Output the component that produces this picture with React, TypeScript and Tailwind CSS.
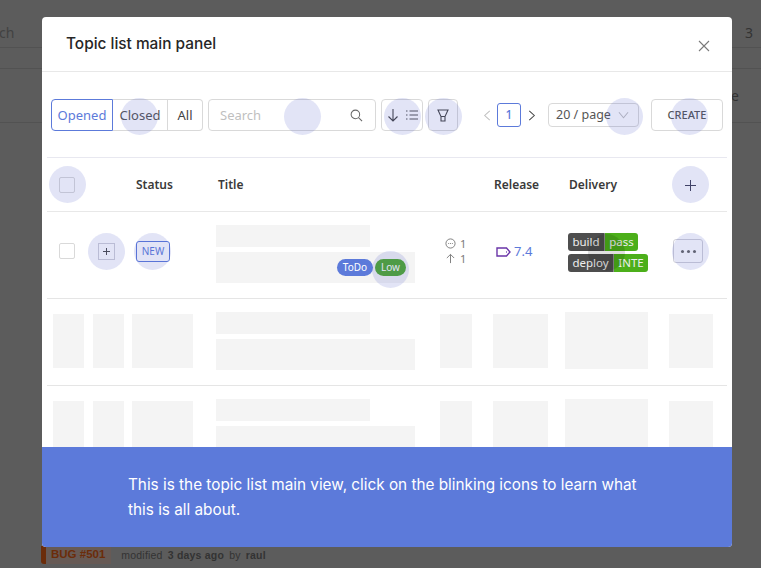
import React from "react";

const ui = "font-['Noto_Sans','Open_Sans',sans-serif]";

function Pulse({ className }: { className: string }) {
  return <div className={`pointer-events-none absolute h-[37px] w-[37px] rounded-full bg-[#4d56c4]/[0.16] ${className}`} />;
}

function Sk({ className }: { className: string }) {
  return <div className={`shrink-0 bg-[#f4f4f4] ${className}`} />;
}

function SkeletonRow() {
  return (
    <div className="flex h-[87px] shrink-0 border-b border-[#e5e5e5]">
      <Sk className="ml-[6px] mt-[15px] h-[54px] w-[31px]" />
      <Sk className="ml-[9px] mt-[15px] h-[54px] w-[31px]" />
      <Sk className="ml-[8px] mt-[15px] h-[54px] w-[61px]" />
      <div className="ml-[23px] flex w-[199px] shrink-0 flex-col gap-[5px] pt-[13px]">
        <Sk className="h-[22px] w-[154px]" />
        <Sk className="h-[31px] w-[199px]" />
      </div>
      <Sk className="ml-[25px] mt-[15px] h-[54px] w-[32px]" />
      <Sk className="ml-[21px] mt-[15px] h-[54px] w-[55px]" />
      <Sk className="ml-[17px] mt-[13px] h-[57px] w-[83px]" />
      <Sk className="ml-[21px] mt-[15px] h-[54px] w-[44px]" />
    </div>
  );
}

function Badge({ left, right, leftW, rightW }: { left: string; right: string; leftW: string; rightW: string }) {
  return (
    <div className="flex h-[18px] overflow-hidden rounded-[3px] text-[11.5px] leading-[18px] text-[#eeeeee]">
      <span className={`bg-[#4e4e4e] text-center ${leftW}`}>{left}</span>
      <span className={`border-l border-[#8a8a8a] bg-[#4caf1a] text-center ${rightW}`}>{right}</span>
    </div>
  );
}

export default function App() {
  return (
    <div className={`relative h-[568px] w-[761px] overflow-hidden bg-[#5c5c5c] ${ui}`}>
      {/* page behind the dimmed overlay */}
      <div className="flex h-[48px] items-center justify-between border-b border-[#525252] pr-[8px] pt-[18px] text-[14px] text-[#333]">
        <span className="-ml-[1px] text-[#424242]">ch</span>
        <span>3</span>
      </div>
      <div className="h-[21px] border-b border-[#525252]" />
      <div className="flex h-[54px] items-center justify-end border-b border-[#525252] pr-[22px] text-[14px] text-[#333]">
        <span>e</span>
      </div>
      <div className="absolute left-[41px] top-[545px] flex h-[19px] items-center gap-[10px] text-[10.5px] text-[#333]">
        <span className="flex h-[18px] items-center rounded-bl-[3px] border-l-[5px] border-[#6b2c0a] bg-[#675a55] pl-[5px] pr-[6px] font-['Liberation_Sans',sans-serif] text-[11.5px] font-bold text-[#6b2c0a]">
          BUG #501
        </span>
        <span className="mt-[2px] font-['Liberation_Sans',sans-serif] tracking-[0.2px]">
          modified <b className="mx-[2px]">3 days ago</b> by <b className="ml-[2px]">raul</b>
        </span>
      </div>

      {/* modal */}
      <div className="absolute left-[42px] top-[17px] flex h-[530px] w-[690px] flex-col overflow-hidden rounded-[4px] bg-white">
        <div className="flex h-[55px] shrink-0 items-center justify-between border-b border-[#e8e8e8] pl-[24px] pr-[22px]">
          <h2 className="font-['Inter',sans-serif] text-[15.4px] font-medium text-[#262626]">Topic list main panel</h2>
          <svg viewBox="0 0 12 12" className="mt-[4px] h-[12px] w-[12px]" fill="none" stroke="#7a7a7a" strokeWidth="1.1">
            <path d="M1 1l10 10M11 1L1 11" />
          </svg>
        </div>

        <div className="min-h-0 flex-1 overflow-hidden">
          {/* toolbar */}
          <div className="mx-[5px] flex h-[86px] items-start border-b border-[#e8e8f0] pl-[4px] pt-[27px] text-[13px] text-[#4a4a4a]">
            <div className="flex h-[32px] items-stretch rounded-[4px] leading-[30px]">
              <span className="w-[62px] rounded-l-[4px] border border-[#5c7ada] text-center text-[#5c7ada]">Opened</span>
              <span className="w-[55px] border-y border-r border-[#d9d9d9] text-center text-[#555]">Closed</span>
              <span className="w-[35px] rounded-r-[4px] border-y border-r border-[#d9d9d9] text-center text-[#444]">All</span>
            </div>
            <div className="ml-[5px] flex h-[32px] w-[168px] items-center justify-between rounded-[4px] border border-[#d9d9d9] pl-[11px] pr-[12px] text-[#bfbfbf]">
              <span className="pt-[1px]">Search</span>
              <svg viewBox="0 0 14 14" className="h-[13px] w-[13px]" fill="none" stroke="#666" strokeWidth="1.1">
                <circle cx="5.8" cy="5.8" r="4.6" />
                <path d="M9.2 9.2L13 13" />
              </svg>
            </div>
            <div className="ml-[5px] flex h-[32px] w-[42px] items-center justify-center gap-[7px] rounded-[4px] border border-[#d9d9d9]">
              <svg viewBox="0 0 12 14" className="h-[14px] w-[12px]" fill="none" stroke="#444" strokeWidth="1.1">
                <path d="M6 1v12M1.5 8.5L6 13l4.5-4.5" />
              </svg>
              <svg viewBox="0 0 12 10" className="h-[10px] w-[12px]" fill="none" stroke="#555" strokeWidth="1">
                <path d="M3.5 1H12M3.5 5H12M3.5 9H12M0 1h1.5M0 5h1.5M0 9h1.5" />
              </svg>
            </div>
            <div className="ml-[5px] flex h-[32px] w-[30px] items-center justify-center rounded-[4px] border border-[#d9d9d9]">
              <svg viewBox="0 0 12 13" className="h-[13px] w-[12px]" fill="none" stroke="#444" strokeWidth="1.1">
                <path d="M1 1h10L8 7.5v4.5H4V7.5zM3.8 7.5h4.4" />
              </svg>
            </div>
            <div className="ml-[25px] mt-[4px] flex h-[24px] items-center">
              <svg viewBox="0 0 8 12" className="h-[11px] w-[8px]" fill="none" stroke="#bfbfbf" strokeWidth="1.1">
                <path d="M7 1L1.5 6 7 11" />
              </svg>
              <span className="ml-[6px] flex h-[24px] w-[24px] items-center justify-center rounded-[3px] border border-[#5c7ada] text-[12px] font-medium text-[#5c7ada]">1</span>
              <svg viewBox="0 0 8 12" className="ml-[7px] h-[11px] w-[8px]" fill="none" stroke="#444" strokeWidth="1.1">
                <path d="M1 1l5.5 5L1 11" />
              </svg>
              <div className="ml-[12px] flex h-[24px] w-[91px] items-center justify-between rounded-[4px] border border-[#d9d9d9] pl-[7px] pr-[9px] text-[12.5px] text-[#555]">
                <span>20 / page</span>
                <svg viewBox="0 0 12 8" className="h-[8px] w-[11px]" fill="none" stroke="#bfbfbf" strokeWidth="1.1">
                  <path d="M1 1l5 6 5-6" />
                </svg>
              </div>
            </div>
            <div className="ml-[12px] flex h-[32px] w-[72px] items-center justify-center rounded-[4px] border border-[#d9d9d9] text-[11px] font-medium text-[#555]">
              CREATE
            </div>
          </div>

          {/* table head */}
          <div className="mx-[5px] flex h-[54px] items-center border-b border-[#e8e8e8] text-[12px] font-semibold text-[#3a3a3a]">
            <div className="ml-[12px] h-[16px] w-[16px] rounded-[2px] border border-[#d9d9d9]" />
            <span className="ml-[61px] w-[82px]">Status</span>
            <span className="w-[276px]">Title</span>
            <span className="w-[75px]">Release</span>
            <span className="w-[116px]">Delivery</span>
            <svg viewBox="0 0 12 12" className="mt-[1px] h-[11px] w-[11px]" fill="none" stroke="#3f3f55" strokeWidth="1.1">
              <path d="M6 0v12M0 6h12" />
            </svg>
          </div>

          {/* rows */}
          <div className="mx-[5px] flex h-[87px] shrink-0 items-center border-b border-[#e5e5e5] pb-[8px]">
            <div className="ml-[12px] h-[16px] w-[16px] shrink-0 rounded-[2px] border border-[#d9d9d9]" />
            <div className="ml-[23px] flex h-[17px] w-[17px] shrink-0 items-center justify-center border border-[#d0d0d8]">
              <svg viewBox="0 0 8 8" className="h-[7px] w-[7px]" fill="none" stroke="#444" strokeWidth="1.1">
                <path d="M4 0v8M0 4h8" />
              </svg>
            </div>
            <div className="ml-[21px] flex h-[21px] w-[34px] shrink-0 items-center justify-center rounded-[3px] border border-[#5c7ada] text-[10px] text-[#5c7ada]">
              NEW
            </div>
            <div className="relative ml-[46px] mt-[6px] flex w-[199px] shrink-0 flex-col gap-[5px]">
              <Sk className="h-[22px] w-[154px]" />
              <Sk className="h-[31px] w-[199px]" />
              <div className="absolute bottom-[7px] right-[9px] flex gap-[2px] text-[10px] leading-[17px] text-white">
                <span className="w-[36px] rounded-full bg-[#5c7ada] text-center">ToDo</span>
                <span className="w-[31px] rounded-full bg-[#4fa82e] text-center">Low</span>
              </div>
            </div>
            <div className="ml-[30px] flex w-[24px] shrink-0 flex-col text-[11px] leading-[15px] text-[#7a7a7a]">
              <span className="flex items-center gap-[4px]">
                <svg viewBox="0 0 12 12" className="h-[11px] w-[11px]" fill="none" stroke="#777" strokeWidth="1">
                  <circle cx="6" cy="6" r="5" />
                  <path d="M3.5 6h1M5.5 6h1M7.5 6h1" />
                </svg>
                1
              </span>
              <span className="flex items-center gap-[4px]">
                <svg viewBox="0 0 12 12" className="h-[11px] w-[11px]" fill="none" stroke="#777" strokeWidth="1">
                  <path d="M6 11V1.5M2 5.5l4-4 4 4" />
                </svg>
                1
              </span>
            </div>
            <div className="ml-[27px] mt-[1px] flex w-[72px] shrink-0 items-center gap-[3px] text-[13px] text-[#5c7ada]">
              <svg viewBox="0 0 15 10" className="h-[10px] w-[15px]" fill="none" stroke="#6a35a8" strokeWidth="1.4">
                <path d="M1 1h9.5L14 5l-3.5 4H1zM10 5h.8" />
              </svg>
              7.4
            </div>
            <div className="mt-[3px] flex w-[105px] shrink-0 flex-col items-start gap-[3px]">
              <Badge left="build" right="pass" leftW="w-[36px]" rightW="w-[34px]" />
              <Badge left="deploy" right="INTE" leftW="w-[45px]" rightW="w-[35px]" />
            </div>
            <div className="flex h-[24px] w-[30px] shrink-0 items-center justify-center gap-[3px] rounded-[3px] border border-[#d0d0d8]">
              <span className="h-[3px] w-[3px] rounded-full bg-[#666]" />
              <span className="h-[3px] w-[3px] rounded-full bg-[#666]" />
              <span className="h-[3px] w-[3px] rounded-full bg-[#666]" />
            </div>
          </div>
          <div className="mx-[5px]">
            <SkeletonRow />
            <SkeletonRow />
          </div>
        </div>

        <div className="flex h-[100px] shrink-0 items-center bg-[#5c7ada] pl-[86px] pr-[90px] font-['Inter',sans-serif] text-[15.3px] leading-[25px] text-white">
          <p>This is the topic list main view, click on the blinking icons to learn what this is all about.</p>
        </div>

        {/* blinking hint markers */}
        <Pulse className="left-[79px] top-[81px]" />
        <Pulse className="left-[242px] top-[81px]" />
        <Pulse className="left-[342px] top-[81px]" />
        <Pulse className="left-[383px] top-[81px]" />
        <Pulse className="left-[564px] top-[81px]" />
        <Pulse className="left-[629px] top-[81px]" />
        <Pulse className="left-[7px] top-[149px]" />
        <Pulse className="left-[630px] top-[149px]" />
        <Pulse className="left-[46px] top-[216px]" />
        <Pulse className="left-[92px] top-[216px]" />
        <Pulse className="left-[330px] top-[234px]" />
        <Pulse className="left-[630px] top-[216px]" />
        <div className="pointer-events-none absolute left-[546px] top-[217px] h-[37px] w-[37px] rounded-full bg-black/[0.12]" />
      </div>
    </div>
  );
}
